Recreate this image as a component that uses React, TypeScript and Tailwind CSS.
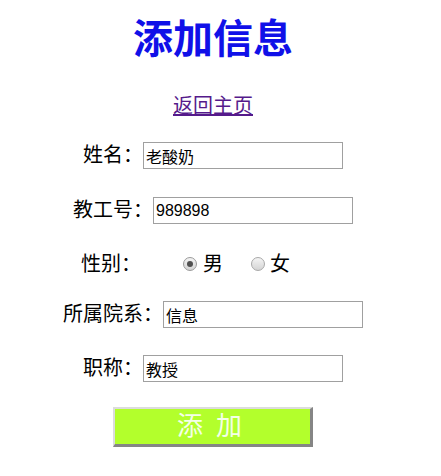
export default function App() {
  const font = { fontFamily: '"Liberation Sans", "Noto Sans CJK SC", sans-serif' };

  const field = (label: string, value: string, top: string) => (
    <div className={`flex h-[27px] items-center justify-center ${top}`}>
      <span className="text-[20px] leading-[27px] text-black">{label}</span>
      <input
        defaultValue={value}
        className="h-[27px] w-[200px] border border-[#a0a0a0] bg-white px-[2px] text-[16px] text-black outline-none"
      />
    </div>
  );

  return (
    <main className="w-[426px] bg-white" style={font}>
      <div className="flex flex-col">
        {/* Heading */}
        <h1 className="mt-[19px] h-[40px] text-center text-[40px] font-bold leading-[40px] text-[#1010e8]">
          添加信息
        </h1>

        <div className="mt-[37px] text-center text-[20px] leading-[20px]">
          <a href="#" className="text-[#551a8b] underline">
            返回主页
          </a>
        </div>

        {field("姓名：", "老酸奶", "mt-[26px]")}
        {field("教工号：", "989898", "mt-[28px]")}

        {/* Gender */}
        <div className="mt-[26px] flex h-[27px] items-center pl-[81px] text-[20px] text-black">
          <span className="w-[60px]">性别：</span>
          <span className="ml-[42px] flex h-[14px] w-[14px] items-center justify-center rounded-full border border-[#9a9a9a] bg-gradient-to-b from-[#f4f4f4] to-[#d4d4d4]">
            <span className="h-[6px] w-[6px] rounded-full bg-[#505050]" />
          </span>
          <span className="ml-[6px]">男</span>
          <span className="ml-[28px] h-[14px] w-[14px] rounded-full border border-[#a8a8a8] bg-gradient-to-b from-[#f4f4f4] to-[#d4d4d4]" />
          <span className="ml-[5px]">女</span>
        </div>

        {field("所属院系：", "信息", "mt-[24px]")}
        {field("职称：", "教授", "mt-[27px]")}

        {/* Submit */}
        <div className="mt-[25px] flex justify-center">
          <button className="flex h-[40px] w-[200px] items-center justify-center gap-[13px] border-t-2 border-l-2 border-r-[3px] border-b-[3px] border-t-[#dcdcdc] border-l-[#dcdcdc] border-r-[#858585] border-b-[#858585] bg-[#b3ff2c] pr-[6px] text-[26px] text-[#f4ffe8]">
            <span>添</span>
            <span>加</span>
          </button>
        </div>
      </div>
    </main>
  );
}
